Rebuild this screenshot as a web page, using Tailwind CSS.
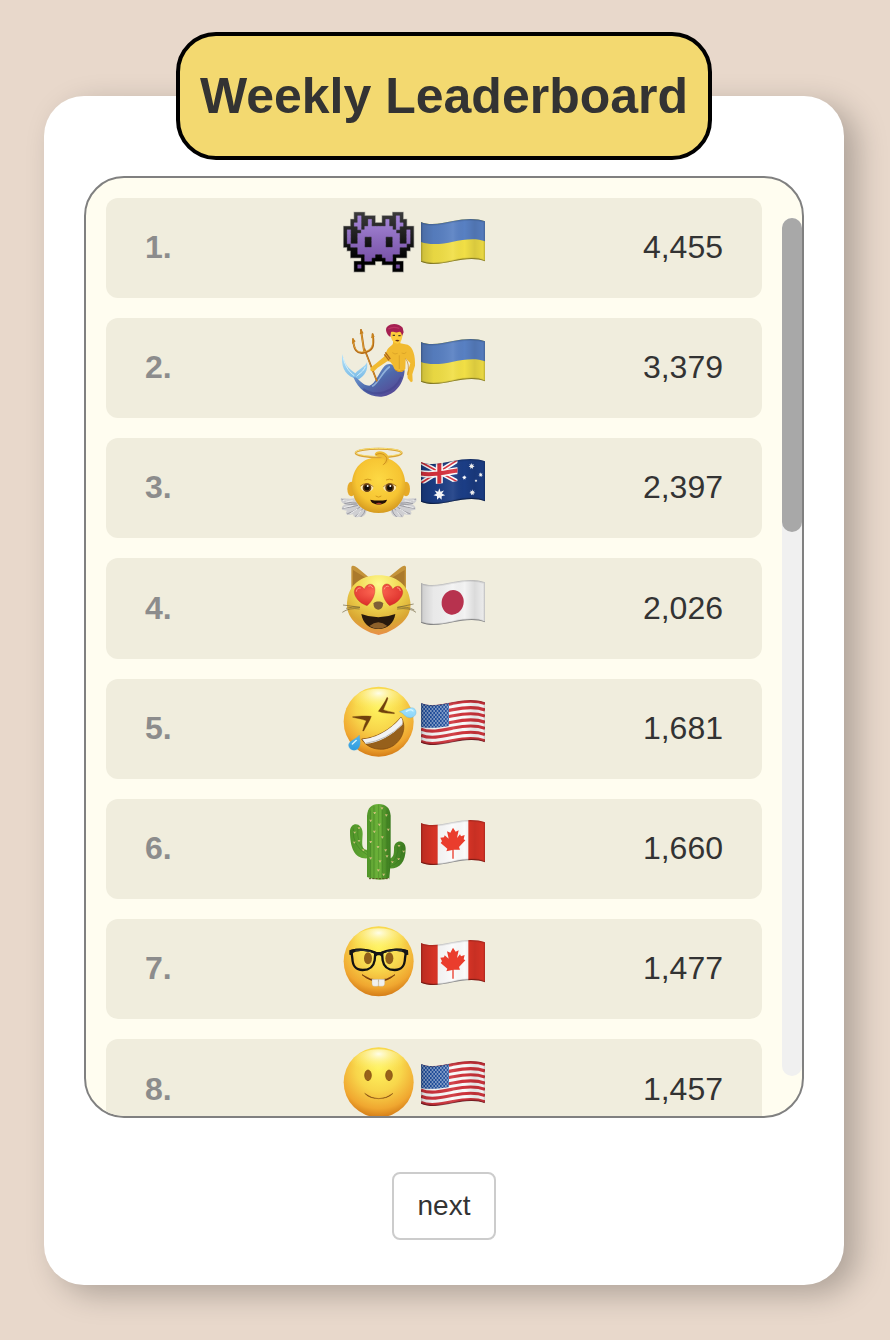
<!DOCTYPE html>
<html lang="en">
<head>
<meta charset="utf-8">
<title>Weekly Leaderboard</title>
<script src="https://cdn.jsdelivr.net/npm/@tailwindcss/browser@4"></script>
</head>
<body class="flow-root h-[1340px] overflow-hidden bg-[#e8d8cb] font-['Liberation_Sans',Arial,sans-serif] text-[#333333]">

<svg width="0" height="0" class="absolute">
  <defs>
    <radialGradient id="face" cx=".5" cy=".3" r=".72"><stop offset="0" stop-color="#fff35e"/><stop offset=".45" stop-color="#f8d64b"/><stop offset=".8" stop-color="#f0a730"/><stop offset="1" stop-color="#d07614"/></radialGradient>
    <radialGradient id="shine" cx=".5" cy=".15" r=".6"><stop offset="0" stop-color="#fffff0" stop-opacity=".95"/><stop offset="1" stop-color="#fff35e" stop-opacity="0"/></radialGradient>
    <radialGradient id="skin" cx=".5" cy=".4" r=".6"><stop offset="0" stop-color="#fdd944"/><stop offset=".7" stop-color="#f6c432"/><stop offset="1" stop-color="#d69b20"/></radialGradient>
    <radialGradient id="catFace" cx=".5" cy=".15" r=".9"><stop offset="0" stop-color="#fffa90"/><stop offset=".4" stop-color="#f0d850"/><stop offset=".75" stop-color="#d9a632"/><stop offset="1" stop-color="#ee8850"/></radialGradient>
    <linearGradient id="alien" x1="0" y1="43" x2="0" y2="221" gradientUnits="userSpaceOnUse"><stop offset="0" stop-color="#a98bdc"/><stop offset=".45" stop-color="#8d6bbd"/><stop offset="1" stop-color="#70479f"/></linearGradient>
    <linearGradient id="alienInk" x1="0" y1="43" x2="0" y2="221" gradientUnits="userSpaceOnUse"><stop offset="0" stop-color="#3b3b3b"/><stop offset=".8" stop-color="#000"/></linearGradient>
    <linearGradient id="tail" x1="0" y1="0" x2="1" y2="1"><stop offset="0" stop-color="#7fb4e6"/><stop offset=".5" stop-color="#4e69ab"/><stop offset="1" stop-color="#5a3a8c"/></linearGradient>
    <linearGradient id="fin" x1="0" y1="0" x2="0" y2="1"><stop offset="0" stop-color="#b9e5fa"/><stop offset="1" stop-color="#7bbbe6"/></linearGradient>
    <linearGradient id="cactus" x1="0" y1="0" x2="1" y2="0"><stop offset="0" stop-color="#4f9428"/><stop offset=".45" stop-color="#6db33a"/><stop offset="1" stop-color="#39791e"/></linearGradient>
    <radialGradient id="heart" cx=".45" cy=".35" r=".65"><stop offset="0" stop-color="#ff6a55"/><stop offset="1" stop-color="#dc2f2b"/></radialGradient>
    <linearGradient id="tear" x1="0" y1="0" x2="0" y2="1"><stop offset="0" stop-color="#a5e4ff"/><stop offset="1" stop-color="#2d9ce0"/></linearGradient>
    <linearGradient id="fold" x1="273" y1="0" x2="465" y2="0" gradientUnits="userSpaceOnUse"><stop offset="0" stop-color="#000" stop-opacity=".16"/><stop offset=".2" stop-color="#000" stop-opacity=".04"/><stop offset=".5" stop-color="#fff" stop-opacity=".08"/><stop offset=".68" stop-color="#000" stop-opacity="0"/><stop offset=".84" stop-color="#000" stop-opacity=".1"/><stop offset="1" stop-color="#000" stop-opacity=".02"/></linearGradient>
    <path id="banner" d="M273 72C300 84 335 76 369 69S440 60 465 70V190C440 179 400 183 369 190S300 203 273 191Z"/>
    <clipPath id="flagClip"><use href="#banner"/></clipPath>
    <clipPath id="usCanton"><path d="M273 72C300 84 330 77 357 72V141C330 146 300 149 273 144Z"/></clipPath>
    <clipPath id="auCanton"><path d="M273 72C300 84 345 74 383 67V129C345 136 300 143 273 134Z"/></clipPath>
    <path id="wave" d="M273 72C300 84 335 76 369 69S440 60 465 70" fill="none"/>
    <pattern id="stars" width="10" height="12" patternUnits="userSpaceOnUse" x="275" y="75"><circle cx="2.5" cy="3" r="2" fill="#fff"/><circle cx="7.5" cy="9" r="2" fill="#fff"/></pattern>
    <path id="star7" d="M0-10 2-4 8-6 4.5-1 10 2 4 4 4 10 0 6-4 10-4 4-10 2-4.5-1-8-6-2-4Z" fill="#fff"/>

    <g id="shade">
      <use href="#banner" fill="url(#fold)"/>
      <g clip-path="url(#flagClip)" fill="none" stroke="#000">
        <use href="#banner" stroke-opacity=".12" stroke-width="4"/>
        <use href="#banner" stroke-opacity=".08" stroke-width="10"/>
        <path d="M273 191C300 203 338 197 369 190S440 179 465 190" stroke-opacity=".28" stroke-width="5"/>
      </g>
    </g>

    <symbol id="flag-ua" viewBox="264 0 246 300">
      <use href="#banner" fill="#f1df45"/>
      <g clip-path="url(#flagClip)"><path d="M273 60H465V130C440 119 400 124 369 131S300 142 273 132Z" fill="#5880c3"/></g>
      <use href="#shade"/>
    </symbol>
    <symbol id="flag-au" viewBox="264 0 246 300">
      <use href="#banner" fill="#1b3d85"/>
      <g clip-path="url(#auCanton)">
        <path d="M270 71 385 133M270 137 385 65" stroke="#fff" stroke-width="14"/>
        <path d="M270 71 385 133M270 137 385 65" stroke="#d8303c" stroke-width="5"/>
        <path d="M328 60V145M270 106C300 113 340 105 385 97" fill="none" stroke="#fff" stroke-width="21"/>
        <path d="M328 60V145M270 106C300 113 340 105 385 97" fill="none" stroke="#d8303c" stroke-width="12"/>
      </g>
      <use href="#star7" transform="translate(328 168) scale(1.75)"/>
      <use href="#star7" transform="translate(425 84) scale(.9)"/>
      <use href="#star7" transform="translate(403 118) scale(.7)"/>
      <use href="#star7" transform="translate(452 110) scale(.7)"/>
      <use href="#star7" transform="translate(438 128) scale(.45)"/>
      <use href="#star7" transform="translate(427 163) scale(.9)"/>
      <use href="#shade"/>
    </symbol>
    <symbol id="flag-jp" viewBox="264 0 246 300">
      <use href="#banner" fill="#f3f3f3"/>
      <use href="#shade"/>
      <ellipse cx="368" cy="130" rx="33" ry="37" transform="rotate(12 368 130)" fill="#b7324e"/>
    </symbol>
    <symbol id="flag-us" viewBox="264 0 246 300">
      <use href="#banner" fill="#fafafa"/>
      <g clip-path="url(#flagClip)" stroke="#cf343c" stroke-width="9.4">
        <use href="#wave" y="4"/><use href="#wave" y="22.8"/><use href="#wave" y="41.3"/><use href="#wave" y="59.8"/><use href="#wave" y="78.2"/><use href="#wave" y="96.7"/><use href="#wave" y="115.5"/>
      </g>
      <g clip-path="url(#usCanton)"><path d="M270 60H357V155H270Z" fill="#2050a0"/><path d="M270 60H357V155H270Z" fill="url(#stars)"/></g>
      <use href="#shade"/>
    </symbol>
    <symbol id="flag-ca" viewBox="264 0 246 300">
      <use href="#banner" fill="#fbfbfb"/>
      <g clip-path="url(#flagClip)" fill="#dd3527"><path d="M273 60H323V205H273ZM415 60H465V205H415Z"/></g>
      <use href="#shade"/>
      <path d="M369 86 361 101 351 97 356 119 344 109 342 115 331 116 336 127 332 132 352 149 349 157 367 153V179H371V152L390 152 387 144 406 124 401 121 404 108 393 112 390 106 381 117 386 94 377 98Z" fill="#ea3d2d"/>
    </symbol>

    <symbol id="alien-icon" viewBox="0 0 264 300"><g id="alien-pixels"></g></symbol>

    <symbol id="merman-icon" viewBox="0 0 264 300">
      <path d="M37 108C32 140 42 170 72 180 78 184 84 186 88 183 104 172 115 158 111 133 104 148 89 151 76 166 60 153 46 148 37 108Z" fill="url(#fin)"/>
      <path d="M40 120C46 148 60 164 73 173M106 146C100 162 88 166 80 175" fill="none" stroke="#d5f1fc" stroke-width="3"/>
      <path d="M70 178C84 174 94 203 118 203 137 198 147 162 163 145 174 134 188 136 196 150 205 163 218 161 224 156 222 196 196 232 155 236 114 238 86 214 70 178Z" fill="url(#tail)"/>
      <path d="M128 204C146 194 158 160 178 147" fill="none" stroke="#a9cdec" stroke-width="5" stroke-linecap="round" opacity=".7"/>
      <path d="M100 213C132 236 190 230 214 177" fill="none" stroke="#3c3d86" stroke-width="6" opacity=".4"/>
      <path d="M103 92 141 190" stroke="#a85f15" stroke-width="5"/>
      <path d="M102 92 140 188" stroke="#d89529" stroke-width="2.5"/>
      <path d="M69 64C72 96 80 108 101 104 128 99 134 86 128 49M93 36 103 103" fill="none" stroke="#b66d18" stroke-width="6" stroke-linecap="round"/>
      <path d="M68 64C72 94 82 105 101 101 126 96 131 84 127 49M93 38 102 100" fill="none" stroke="#e5a83b" stroke-width="2.5"/>
      <path d="M66 78 68 60 77 70M89 49 93 33 101 46M123 61 127 45 134 56" fill="#c7811d"/>
      <path d="M189 75C189 84 175 85 170 99L162 116 135 139C123 147 117 153 124 160L133 159 143 149 172 130C182 128 186 137 193 152 202 166 219 165 226 152L227 121 241 136 232 164 233 181 243 193 248 190 247 169 255 143C256 115 250 87 233 80L211 76V65H190Z" fill="#f1ba30"/>
      <path d="M166 103 181 123M163 109 177 127" stroke="#af681a" stroke-width="4"/>
      <path d="M187 104Q195 111 203 106M215 105Q223 110 229 103M208 112V153" fill="none" stroke="#d29a22" stroke-width="2"/>
      <path d="M226 121Q240 137 233 171M195 156Q207 165 222 157" fill="none" stroke="#bf7d18" stroke-width="2"/>
      <path d="M182 42C180 62 189 76 203 77 215 74 219 56 217 39L206 32 188 35Z" fill="#fdcb3b"/>
      <path d="M181 57C167 47 164 30 174 24 184 14 209 16 218 29L221 43 216 54C215 45 212 41 208 41 196 47 188 38 183 43Z" fill="#a51f51"/>
      <path d="M175 33Q188 24 208 31" fill="none" stroke="#bd3263" stroke-width="4"/>
      <path d="M188 52H195M205 53H212" stroke="#4d3f25" stroke-width="4"/>
      <path d="M195 67Q202 63 209 68Q201 73 195 67" fill="#693013"/>
    </symbol>

    <symbol id="angel-icon" viewBox="0 0 264 300">
      <g id="wing">
        <path d="M74 180C57 185 40 178 32 182 32 193 41 198 48 199 39 201 33 208 36 215L51 218C45 225 47 230 56 231L70 229C68 238 78 239 86 236 101 241 110 229 111 211Z" fill="#cfcfd2"/>
        <path d="M34 183Q52 196 80 195M37 211Q58 209 84 202M51 228Q76 219 90 207M75 236Q91 224 99 211M92 237Q105 226 106 213M43 196Q61 202 82 198" fill="none" stroke="#909097" stroke-width="2.5"/>
        <path d="M38 187Q54 194 68 188M41 209Q58 205 70 202M61 227 82 213M81 234 94 217" fill="none" stroke="#ececed" stroke-width="3"/>
      </g>
      <use href="#wing" transform="translate(292 0) scale(-1 1)"/>
      <ellipse cx="64" cy="153" rx="12" ry="22" fill="#e6aa27"/><ellipse cx="228" cy="153" rx="12" ry="22" fill="#e6aa27"/>
      <path d="M146 58C96 58 65 93 66 143 67 194 98 225 146 225S225 194 226 143C227 93 196 58 146 58Z" fill="url(#skin)"/>
      <ellipse cx="146" cy="45" rx="69" ry="13" fill="none" stroke="#d9a335" stroke-width="6"/>
      <ellipse cx="146" cy="43" rx="69" ry="12" fill="none" stroke="#f8df75" stroke-width="3"/>
      <path d="M134 49C137 36 160 37 171 49 184 64 173 82 155 82 165 75 169 66 157 60 150 56 141 60 134 49Z" fill="#eebd35"/>
      <path d="M137 51C151 41 168 50 171 63Q169 74 160 80" fill="none" stroke="#c98918" stroke-width="2.5"/>
      <g><ellipse cx="111" cy="149" rx="19" ry="12" fill="#fbe9b4"/><ellipse cx="179" cy="149" rx="19" ry="12" fill="#fbe9b4"/><circle cx="111" cy="149" r="13" fill="#633b11"/><circle cx="179" cy="149" r="13" fill="#633b11"/><circle cx="111" cy="149" r="8" fill="#140d07"/><circle cx="179" cy="149" r="8" fill="#140d07"/><circle cx="113" cy="144" r="3" fill="#fff"/><circle cx="181" cy="144" r="3" fill="#fff"/></g>
      <path d="M91 144Q110 129 130 146M160 146Q180 129 199 144" fill="none" stroke="#7e4c14" stroke-width="2"/>
      <path d="M103 126Q113 121 124 126M168 126Q178 121 189 126M137 174Q146 181 154 174" fill="none" stroke="#d39a1d" stroke-width="3"/>
      <path d="M121 185Q146 190 171 185C168 204 124 204 121 185Z" fill="#231005"/><path d="M137 197Q147 192 156 197Q147 201 137 197Z" fill="#a63a2c"/>
    </symbol>

    <symbol id="cat-icon" viewBox="0 0 264 300">
      <path d="M64 101V27C67 19 77 25 83 30L120 61 82 97ZM228 101V27C225 19 216 25 210 30L172 61 210 97Z" fill="#c4933a"/>
      <path d="M69 88V36L108 60ZM224 88V36L185 60Z" fill="#ab7a2c"/>
      <path d="M146 52C91 52 57 83 52 126 44 168 73 203 122 224L146 231 170 224C219 203 249 168 240 126 235 83 201 52 146 52Z" fill="url(#catFace)"/>
      <path d="M111 143C88 136 71 115 73 99 76 82 93 79 103 94 108 76 130 73 134 89 138 106 127 131 111 143ZM179 143C202 136 221 115 218 99 214 82 198 80 188 94 183 76 163 72 158 87 154 106 164 131 179 143Z" fill="url(#heart)" stroke="#bd2e22" stroke-width="1"/>
      <path d="M79 100Q81 88 91 90M116 84Q124 79 128 89M163 93Q166 82 175 85M202 89Q211 89 211 98" fill="none" stroke="#ff9c80" stroke-width="3" stroke-linecap="round"/>
      <path d="M131 136C134 129 157 129 159 136 160 147 154 155 145 155S129 146 131 136Z" fill="#7f6037"/>
      <path d="M94 168Q145 188 196 168C192 195 172 213 145 213S98 195 94 168Z" fill="#281a0d"/>
      <path d="M118 204Q145 182 172 204Q145 221 118 204Z" fill="#8d612a"/>
      <path d="M37 163Q58 148 89 153M48 151Q67 145 90 148M39 141 90 148M201 153Q240 148 258 163M201 148Q231 144 253 156M203 148 251 138" fill="none" stroke="#665831" stroke-width="1.8"/>
    </symbol>

    <g id="head"><circle cx="146" cy="127" r="105" fill="url(#face)"/><ellipse cx="146" cy="74" rx="84" ry="46" fill="url(#shine)"/></g>
    <symbol id="rofl-icon" viewBox="0 0 264 300">
      <use href="#head" y="1"/>
      <path d="M68 113C87 112 103 109 124 112 119 127 109 141 101 156L98 156C101 143 105 133 109 125 95 120 81 118 68 115ZM171 55C165 69 155 83 145 97 159 103 175 103 193 104L193 101C181 98 170 96 160 92 165 80 171 69 174 57Z" fill="#71410d" stroke="#71410d"/>
      <path d="M95 180C137 178 184 151 213 114 231 143 219 180 190 200 155 222 110 208 95 180Z" fill="#96601b" stroke="#79420d" stroke-width="2"/>
      <path d="M97 181C137 179 187 149 213 115 218 121 219 130 217 137 185 169 146 192 107 194Z" fill="#f3f3f3"/>
      <path d="M107 193Q169 184 217 136" fill="none" stroke="#b9b9b9" stroke-width="3"/>
      <path d="M208 98C224 94 245 79 255 91 264 103 252 118 239 116 225 116 221 101 208 98ZM88 168C78 183 53 185 56 201 59 216 81 218 87 205 93 194 90 184 88 168Z" fill="url(#tear)" stroke="#52aadc"/>
      <path d="M229 97Q244 88 249 96M79 184 67 195" fill="none" stroke="#d3f6ff" stroke-width="4" stroke-linecap="round"/>
    </symbol>

    <symbol id="cactus-icon" viewBox="0 0 264 300">
      <path d="M112 153C94 150 96 138 98 105 99 68 60 66 60 98 60 147 74 181 113 178ZM178 179C190 175 192 167 192 149 191 121 227 119 227 149 227 190 208 210 178 208Z" fill="url(#cactus)"/>
      <path d="M111 234V50C113 27 124 15 146 15S180 27 182 50V191L178 237Q146 249 111 234Z" fill="url(#cactus)"/>
      <path d="M121 35V238M132 22V240M145 18V241M158 22V240M171 34V237M70 88Q65 141 111 167M84 81Q77 140 112 159M204 140Q207 178 179 194M216 139Q220 191 179 203" fill="none" stroke="#31691c" stroke-width="2" opacity=".5"/>
      <path d="M126 27V234M151 20V238" stroke="#88c550" stroke-width="2" opacity=".5"/>
      <path d="M117 239H178" stroke="#5a4c22" stroke-width="3" stroke-dasharray="6 4"/>
      <path d="M131 39l3 6 3-6M153 25l3 6 3-6M166 46l3 6 3-6M119 62l3 6 3-6M145 74l3 6 3-6M172 89l3 6 3-6M130 95l3 6 3-6M154 112l3 6 3-6M119 126l3 6 3-6M141 141l3 6 3-6M164 151l3 6 3-6M119 175l3 6 3-6M147 184l3 6 3-6M168 169l3 6 3-6M142 211l3 6 3-6M158 224l3 6 3-6M71 98l3 5 3-5M84 85l3 5 3-5M84 123l3 5 3-5M70 128l3 5 3-5M97 151l3 5 3-5M204 138l3 5 3-5M218 155l3 5 3-5M203 178l3 5 3-5M184 187l3 5 3-5" fill="#c8a15e" stroke="#efe6a8" stroke-width="1.4"/>
    </symbol>

    <symbol id="nerd-icon" viewBox="0 0 264 300">
      <use href="#head"/>
      <g fill="#85500f"><ellipse cx="114" cy="118" rx="12" ry="18"/><ellipse cx="178" cy="118" rx="12" ry="18"/></g>
      <path d="M64 96C87 89 118 92 136 101L134 124C130 147 116 153 98 153 75 152 68 140 67 118ZM228 96C205 89 174 92 156 101L158 124C162 147 176 153 194 153 217 152 224 140 225 118Z" fill="#fff37c" fill-opacity=".1" stroke="#111" stroke-width="7"/>
      <path d="M58 94C85 85 119 91 136 99H156C173 90 210 85 234 94L235 107 227 109 222 101C202 94 177 95 161 103L156 114C151 107 141 107 136 114L131 103C115 95 90 94 70 101L65 109 58 107Z" fill="#141516"/>
      <path d="M76 94Q98 91 123 98M169 98Q194 91 217 94" fill="none" stroke="#454b4e" stroke-width="2"/>
      <path d="M96 167Q146 201 195 167Q174 187 146 187T96 167Z" fill="#6b3209" stroke="#6b3209" stroke-width="2"/>
      <path d="M126 181H145V201Q126 205 126 194ZM146 181H164V194Q164 204 146 201Z" fill="#f1f1ee" stroke="#b6b3a7"/>
    </symbol>

    <symbol id="smile-icon" viewBox="0 0 264 300">
      <g transform="translate(0 3)">
        <use href="#head"/>
        <g fill="#99611a" stroke="#79460e" stroke-width="2"><ellipse cx="114" cy="106" rx="10" ry="16"/><ellipse cx="177" cy="106" rx="10" ry="16"/></g>
        <path d="M104 160Q146 192 189 160Q174 176 146 176T104 160Z" fill="#683009" stroke="#683009"/>
      </g>
    </symbol>
  </defs>
</svg>

<main class="mt-24 ml-11 flex h-[1189px] w-[800px] flex-col items-center rounded-[40px] bg-white shadow-[13px_9px_30px_rgba(0,0,0,0.25)]">
  <h1 class="-mt-16 flex h-32 w-[536px] shrink-0 items-center justify-center rounded-[40px] border-4 border-black bg-[#f3d970] text-[50px] leading-none font-bold whitespace-nowrap">Weekly Leaderboard</h1>

  <section class="mt-4 flex h-[942px] w-[720px] shrink-0 overflow-hidden rounded-[40px] border-2 border-[#808080] bg-[#fffdf0]">
    <ol class="flex w-[696px] flex-col gap-5 p-5">
      <li class="flex h-[100.15px] shrink-0 items-center rounded-xl bg-[#f0eddd] pr-[39px] text-[32px]"><span class="w-[224px] pb-0.5 pl-[39px] font-bold text-[#8c8c8c]">1.</span><svg class="h-[100px] w-[88px]"><use href="#alien-icon"/></svg><svg class="h-[100px] w-[82px]"><use href="#flag-ua"/></svg><span class="ml-auto pb-0.5">4,455</span></li>
      <li class="flex h-[100.15px] shrink-0 items-center rounded-xl bg-[#f0eddd] pr-[39px] text-[32px]"><span class="w-[224px] pb-0.5 pl-[39px] font-bold text-[#8c8c8c]">2.</span><svg class="h-[100px] w-[88px]"><use href="#merman-icon"/></svg><svg class="h-[100px] w-[82px]"><use href="#flag-ua"/></svg><span class="ml-auto pb-0.5">3,379</span></li>
      <li class="flex h-[100.15px] shrink-0 items-center rounded-xl bg-[#f0eddd] pr-[39px] text-[32px]"><span class="w-[224px] pb-0.5 pl-[39px] font-bold text-[#8c8c8c]">3.</span><svg class="h-[100px] w-[88px]"><use href="#angel-icon"/></svg><svg class="h-[100px] w-[82px]"><use href="#flag-au"/></svg><span class="ml-auto pb-0.5">2,397</span></li>
      <li class="flex h-[100.15px] shrink-0 items-center rounded-xl bg-[#f0eddd] pr-[39px] text-[32px]"><span class="w-[224px] pl-[39px] font-bold text-[#8c8c8c]">4.</span><svg class="h-[100px] w-[88px]"><use href="#cat-icon"/></svg><svg class="mt-px h-[100px] w-[82px]"><use href="#flag-jp"/></svg><span class="ml-auto">2,026</span></li>
      <li class="flex h-[100.15px] shrink-0 items-center rounded-xl bg-[#f0eddd] pr-[39px] text-[32px]"><span class="w-[224px] pb-0.5 pl-[39px] font-bold text-[#8c8c8c]">5.</span><svg class="h-[100px] w-[88px]"><use href="#rofl-icon"/></svg><svg class="h-[100px] w-[82px]"><use href="#flag-us"/></svg><span class="ml-auto pb-0.5">1,681</span></li>
      <li class="flex h-[100.15px] shrink-0 items-center rounded-xl bg-[#f0eddd] pr-[39px] text-[32px]"><span class="w-[224px] pb-0.5 pl-[39px] font-bold text-[#8c8c8c]">6.</span><svg class="h-[100px] w-[88px]"><use href="#cactus-icon"/></svg><svg class="h-[100px] w-[82px]"><use href="#flag-ca"/></svg><span class="ml-auto pb-0.5">1,660</span></li>
      <li class="flex h-[100.15px] shrink-0 items-center rounded-xl bg-[#f0eddd] pr-[39px] text-[32px]"><span class="w-[224px] pb-0.5 pl-[39px] font-bold text-[#8c8c8c]">7.</span><svg class="h-[100px] w-[88px]"><use href="#nerd-icon"/></svg><svg class="h-[100px] w-[82px]"><use href="#flag-ca"/></svg><span class="ml-auto pb-0.5">1,477</span></li>
      <li class="flex h-[100.15px] shrink-0 items-center rounded-xl bg-[#f0eddd] pr-[39px] text-[32px]"><span class="w-[224px] pl-[39px] font-bold text-[#8c8c8c]">8.</span><svg class="h-[100px] w-[88px]"><use href="#smile-icon"/></svg><svg class="mt-0.5 h-[100px] w-[82px]"><use href="#flag-us"/></svg><span class="ml-auto">1,457</span></li>
    </ol>
    <div class="mt-10 h-[858px] w-5 shrink-0 rounded-[10px] bg-[#f0f0f0]">
      <div class="h-[314px] rounded-[10px] bg-[#a8a8a8]"></div>
    </div>
  </section>

  <button class="mt-[54px] h-[68px] w-[104px] shrink-0 rounded-lg border-2 border-[#cccccc] bg-white text-[28px]">next</button>
</main>

<script>
  // Left half of the alien sprite, mirrored around its centre: # outline, P purple
  const sprite = [
    "...###....", "...#P####.", "..##P##P#.", "..#PP##P##", "####P#PPPP", "#P###PPPPP",
    "#P##PPPPPP", "#P##PP##PP", "#P##PP##PP", "##PPPP##PP", ".###PPPPPP", "..##PPPPPP",
    "..####PPP#", ".....#PP##", "...######.", "...#P#....", "...###...."
  ];
  let ink = "", body = "";
  sprite.forEach((line, r) => {
    [...line, ...[...line].reverse()].forEach((c, i) => {
      const cell = `M${41 + i * 10.5} ${43 + r * 10.5}h10.5v10.5h-10.5z`;
      if (c !== ".") ink += cell;
      if (c === "P") body += cell;
    });
  });
  document.getElementById("alien-pixels").innerHTML =
    `<path d="${ink}" fill="none" stroke="#777" stroke-width="4" stroke-opacity=".5"/><path d="${ink}" fill="url(#alienInk)"/><path d="${body}" fill="url(#alien)" stroke="url(#alien)"/>`;
</script>
</body>
</html>
